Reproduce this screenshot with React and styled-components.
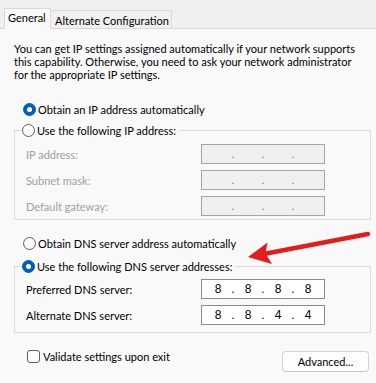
import React from "react";
import styled, { createGlobalStyle } from "styled-components";

const GlobalStyle = createGlobalStyle`
  html, body {
    margin: 0;
    padding: 0;
    background: #f9f9f9;
  }
  body {
    font-family: Lato, "Liberation Sans", sans-serif;
    font-size: 11px;
    color: #000;
  }
`;

const Dialog = styled.div`
  position: relative;
  width: 376px;
  height: 383px;
  overflow: hidden;
  background: #f9f9f9;
`;

const TabStrip = styled.div`
  display: flex;
  align-items: flex-end;
  height: 28px;
  padding-left: 4px;
  background: #f0f0f0;
  border-bottom: 1px solid #d9d9d9;
`;

const Tab = styled.div`
  box-sizing: border-box;
  display: flex;
  align-items: center;
  height: ${(p) => (p.$active ? "21px" : "18px")};
  margin-bottom: ${(p) => (p.$active ? "-1px" : "0")};
  padding: ${(p) => (p.$active ? "0 0 2px 3px" : "2px 0 0 4px")};
  width: ${(p) => p.$width}px;
  background: ${(p) => (p.$active ? "#f9f9f9" : "#f0f0f0")};
  border: 1px solid #d9d9d9;
  border-bottom: ${(p) => (p.$active ? "1px solid #f9f9f9" : "none")};
  border-left: ${(p) => (p.$active ? "1px solid #d9d9d9" : "none")};
  white-space: nowrap;
`;

const Panel = styled.div`
  display: flex;
  flex-direction: column;
  padding: 13px 5px 0 14px;
`;

const Intro = styled.p`
  margin: 0;
  line-height: 13px;
`;

const RadioRow = styled.label`
  display: flex;
  align-items: center;
  gap: 2px;
  height: 14px;
  margin-top: ${(p) => p.$top || 0}px;
  padding-left: ${(p) => p.$indent || 0}px;
  color: #000;
  white-space: nowrap;
`;

const RadioDot = styled.span`
  box-sizing: border-box;
  width: 13px;
  height: 13px;
  border-radius: 50%;
  flex: none;
  background: ${(p) => (p.$checked ? "#005fb8" : "#fbfbfb")};
  border: 1px solid ${(p) => (p.$checked ? "#005fb8" : "#5f5f5f")};
  display: flex;
  align-items: center;
  justify-content: center;

  &::after {
    content: "";
    display: ${(p) => (p.$checked ? "block" : "none")};
    width: 5px;
    height: 5px;
    border-radius: 50%;
    background: #fff;
  }
`;

const Group = styled.fieldset`
  margin: ${(p) => p.$top || 0}px 0 0 0;
  min-width: 0;
  padding: 0 0 ${(p) => p.$bottom}px 11px;
  border: 1px solid #dcdcdc;
  display: grid;
  grid-template-columns: 175px 124px;
  row-gap: 6px;
  align-items: center;
`;

const Legend = styled.legend`
  margin-left: -4px;
  padding: 0 3px 0 0;
  margin-bottom: ${(p) => p.$gap}px;
`;

const FieldLabel = styled.span`
  color: ${(p) => (p.$disabled ? "#a0a0a0" : "#000")};
`;

const IpBox = styled.div`
  box-sizing: border-box;
  display: flex;
  align-items: center;
  height: 20px;
  padding-left: 4px;
  background: ${(p) => (p.$disabled ? "#f0f0f0" : "#fff")};
  border: 1px solid ${(p) => (p.$disabled ? "#a5a5a5" : "#8a8a8a")};
`;

const Octet = styled.span`
  width: 24px;
  text-align: center;
  font-family: "Liberation Sans", sans-serif;
  font-size: 12px;
  color: #000;
`;

const Dot = styled.span`
  width: 6px;
  text-align: center;
  font-family: "Liberation Sans", sans-serif;
  font-size: 12px;
  color: ${(p) => (p.$disabled ? "#7a7a9a" : "#000")};
`;

const Footer = styled.div`
  display: flex;
  justify-content: space-between;
  align-items: flex-start;
  padding: 16px 2px 0 13px;
`;

const CheckRow = styled.label`
  display: flex;
  align-items: center;
  gap: 3px;
  height: 14px;
`;

const CheckBox = styled.span`
  box-sizing: border-box;
  width: 13px;
  height: 13px;
  border-radius: 3px;
  border: 1px solid #5f5f5f;
  background: #fbfbfb;
`;

const Button = styled.button`
  box-sizing: border-box;
  width: 87px;
  height: 21px;
  margin-top: 2px;
  padding: 0;
  font-family: Lato, "Liberation Sans", sans-serif;
  font-size: 11px;
  color: #000;
  background: #fdfdfd;
  border: 1px solid #d3d3d3;
  border-bottom-color: #c4c4c4;
  border-radius: 4px;
`;

const Arrow = styled.svg`
  position: absolute;
  left: 0;
  top: 0;
  pointer-events: none;
`;

const IpField = ({ value, disabled }) => {
  const parts = value ? value.split(".") : ["", "", "", ""];
  return (
    <IpBox $disabled={disabled}>
      {parts.map((p, i) => (
        <React.Fragment key={i}>
          {i > 0 && <Dot $disabled={disabled}>.</Dot>}
          <Octet>{p}</Octet>
        </React.Fragment>
      ))}
    </IpBox>
  );
};

const Radio = ({ checked, children, top, indent }) => (
  <RadioRow $top={top} $indent={indent}>
    <RadioDot $checked={checked} />
    {children}
  </RadioRow>
);

export default function App() {
  return (
    <Dialog>
      <GlobalStyle />
      <TabStrip>
        <Tab $active $width={47}>General</Tab>
        <Tab $width={121}>Alternate Configuration</Tab>
      </TabStrip>
      <Panel>
        <Intro>
          You can get IP settings assigned automatically if your network supports
          <br />
          this capability. Otherwise, you need to ask your network administrator
          <br />
          for the appropriate IP settings.
        </Intro>

        <Radio checked top={21} indent={9}>Obtain an IP address automatically</Radio>

        <Group $top={7} $bottom={3}>
          <Legend $gap={7}>
            <Radio>Use the following IP address:</Radio>
          </Legend>
          <FieldLabel $disabled>IP address:</FieldLabel>
          <IpField disabled />
          <FieldLabel $disabled>Subnet mask:</FieldLabel>
          <IpField disabled />
          <FieldLabel $disabled>Default gateway:</FieldLabel>
          <IpField disabled />
        </Group>

        <Radio top={16} indent={9}>Obtain DNS server address automatically</Radio>

        <Group $top={9} $bottom={7}>
          <Legend $gap={6}>
            <Radio checked>Use the following DNS server addresses:</Radio>
          </Legend>
          <FieldLabel>Preferred DNS server:</FieldLabel>
          <IpField value="8.8.8.8" />
          <FieldLabel>Alternate DNS server:</FieldLabel>
          <IpField value="8.8.4.4" />
        </Group>

        <Footer>
          <CheckRow>
            <CheckBox />
            Validate settings upon exit
          </CheckRow>
          <Button>Advanced...</Button>
        </Footer>
      </Panel>

      <Arrow width="376" height="383" viewBox="0 0 376 383">
        <line x1="368" y1="234" x2="265" y2="253.7" stroke="#e31c1c" strokeWidth="4.5" strokeLinecap="round" />
        <polygon points="248,257 267.5,242.5 265.5,253.5 272,264" fill="#e31c1c" />
      </Arrow>
    </Dialog>
  );
}
